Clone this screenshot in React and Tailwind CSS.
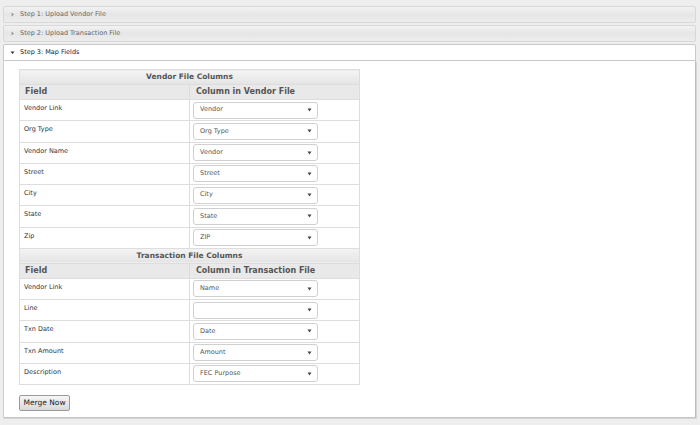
import React from 'react';

const vendorRows = [
  ['Vendor Link', 'Vendor'],
  ['Org Type', 'Org Type'],
  ['Vendor Name', 'Vendor'],
  ['Street', 'Street'],
  ['City', 'City'],
  ['State', 'State'],
  ['Zip', 'ZIP'],
];

const txnRows = [
  ['Vendor Link', 'Name'],
  ['Line', ''],
  ['Txn Date', 'Date'],
  ['Txn Amount', 'Amount'],
  ['Description', 'FEC Purpose'],
];

function Caret({ open }) {
  return (
    <svg width="5" height="5" viewBox="0 0 5 5" className="mr-[5px] shrink-0">
      {open ? <path d="M0.5 1.5 L4.5 1.5 L2.5 4 Z" fill="#333" /> : <path d="M1.5 0.5 L4 2.5 L1.5 4.5 Z" fill="#999" />}
    </svg>
  );
}

function Header({ title, open }) {
  if (open) {
    return (
      <div className="flex h-[17px] items-center rounded-t-[2px] border border-[#c9c9c9] bg-white pl-[6px] text-[6.5px] text-[#222]">
        <Caret open />
        {title}
      </div>
    );
  }
  return (
    <div className="flex h-[17px] items-center rounded-[2px] border border-[#d8d8d8] bg-gradient-to-b from-[#f2f2f2] via-[#e6e6e6] to-[#ededed] pl-[6px] text-[6.5px] text-[#666]">
      <Caret />
      {title}
    </div>
  );
}

function FakeSelect({ value }) {
  return (
    <div className="flex h-[17px] w-[125px] items-center justify-between rounded-[3px] border border-[#d0d0d0] bg-white pl-[6px] pr-[5px] text-[6.5px] text-[#555]">
      <span>{value}</span>
      <svg width="5" height="4" viewBox="0 0 5 4">
        <path d="M0.5 0.5 L4.5 0.5 L2.5 3.5 Z" fill="#444" />
      </svg>
    </div>
  );
}

function Section({ title, column, rows }) {
  return (
    <>
      <tr>
        <th
          colSpan={2}
          className="h-[15px] border-t border-[#ddd] bg-gradient-to-b from-[#f4f4f4] to-[#e4e4e4] text-center text-[7.5px] font-bold text-[#555]"
        >
          {title}
        </th>
      </tr>
      <tr>
        <th className="h-[15px] border-t border-[#ddd] bg-[#e9e9e9] pl-[5px] text-left text-[8px] font-bold text-[#555]">Field</th>
        <th className="h-[15px] border-t border-l border-[#ddd] bg-[#e9e9e9] pl-[6px] text-left text-[8px] font-bold text-[#555]">{column}</th>
      </tr>
      {rows.map(([label, value]) => (
        <tr key={label} className="border-t border-[#ddd]">
          <td className="h-[21.25px] pl-[4px] pt-[4px] align-top text-[6.5px] text-[#333]">{label}</td>
          <td className="h-[21.25px] border-l border-[#ddd] pl-[3px] align-middle">
            <FakeSelect value={value} />
          </td>
        </tr>
      ))}
    </>
  );
}

export default function App() {
  return (
    <div className="min-h-[425px] bg-[#eeeeee] px-[3px] pt-[6px] font-['DejaVu_Sans',sans-serif]">
      <div className="mr-[1px] flex flex-col gap-[2px]">
        <Header title="Step 1: Upload Vendor File" />
        <Header title="Step 2: Upload Transaction File" />
        <div>
          <Header title="Step 3: Map Fields" open />
          <div className="h-[357px] border border-t-0 border-[#cfcfcf] border-r-[#bdbdbd] border-b-[#c4c4c4] bg-white px-[15px] pt-[8px] shadow-[1px_1px_0_#d6d6d6]">
            <table className="w-[340px] table-fixed border-collapse border border-[#ddd]">
              <colgroup>
                <col className="w-[170px]" />
                <col className="w-[170px]" />
              </colgroup>
              <tbody>
                <Section title="Vendor File Columns" column="Column in Vendor File" rows={vendorRows} />
                <Section title="Transaction File Columns" column="Column in Transaction File" rows={txnRows} />
              </tbody>
            </table>
            <button className="mt-[10px] h-[16px] w-[51px] rounded-[2px] border border-[#9a9a9a] bg-gradient-to-b from-[#f6f6f6] to-[#d9d9d9] text-[7.5px] text-[#222]">
              Merge Now
            </button>
          </div>
        </div>
      </div>
    </div>
  );
}
